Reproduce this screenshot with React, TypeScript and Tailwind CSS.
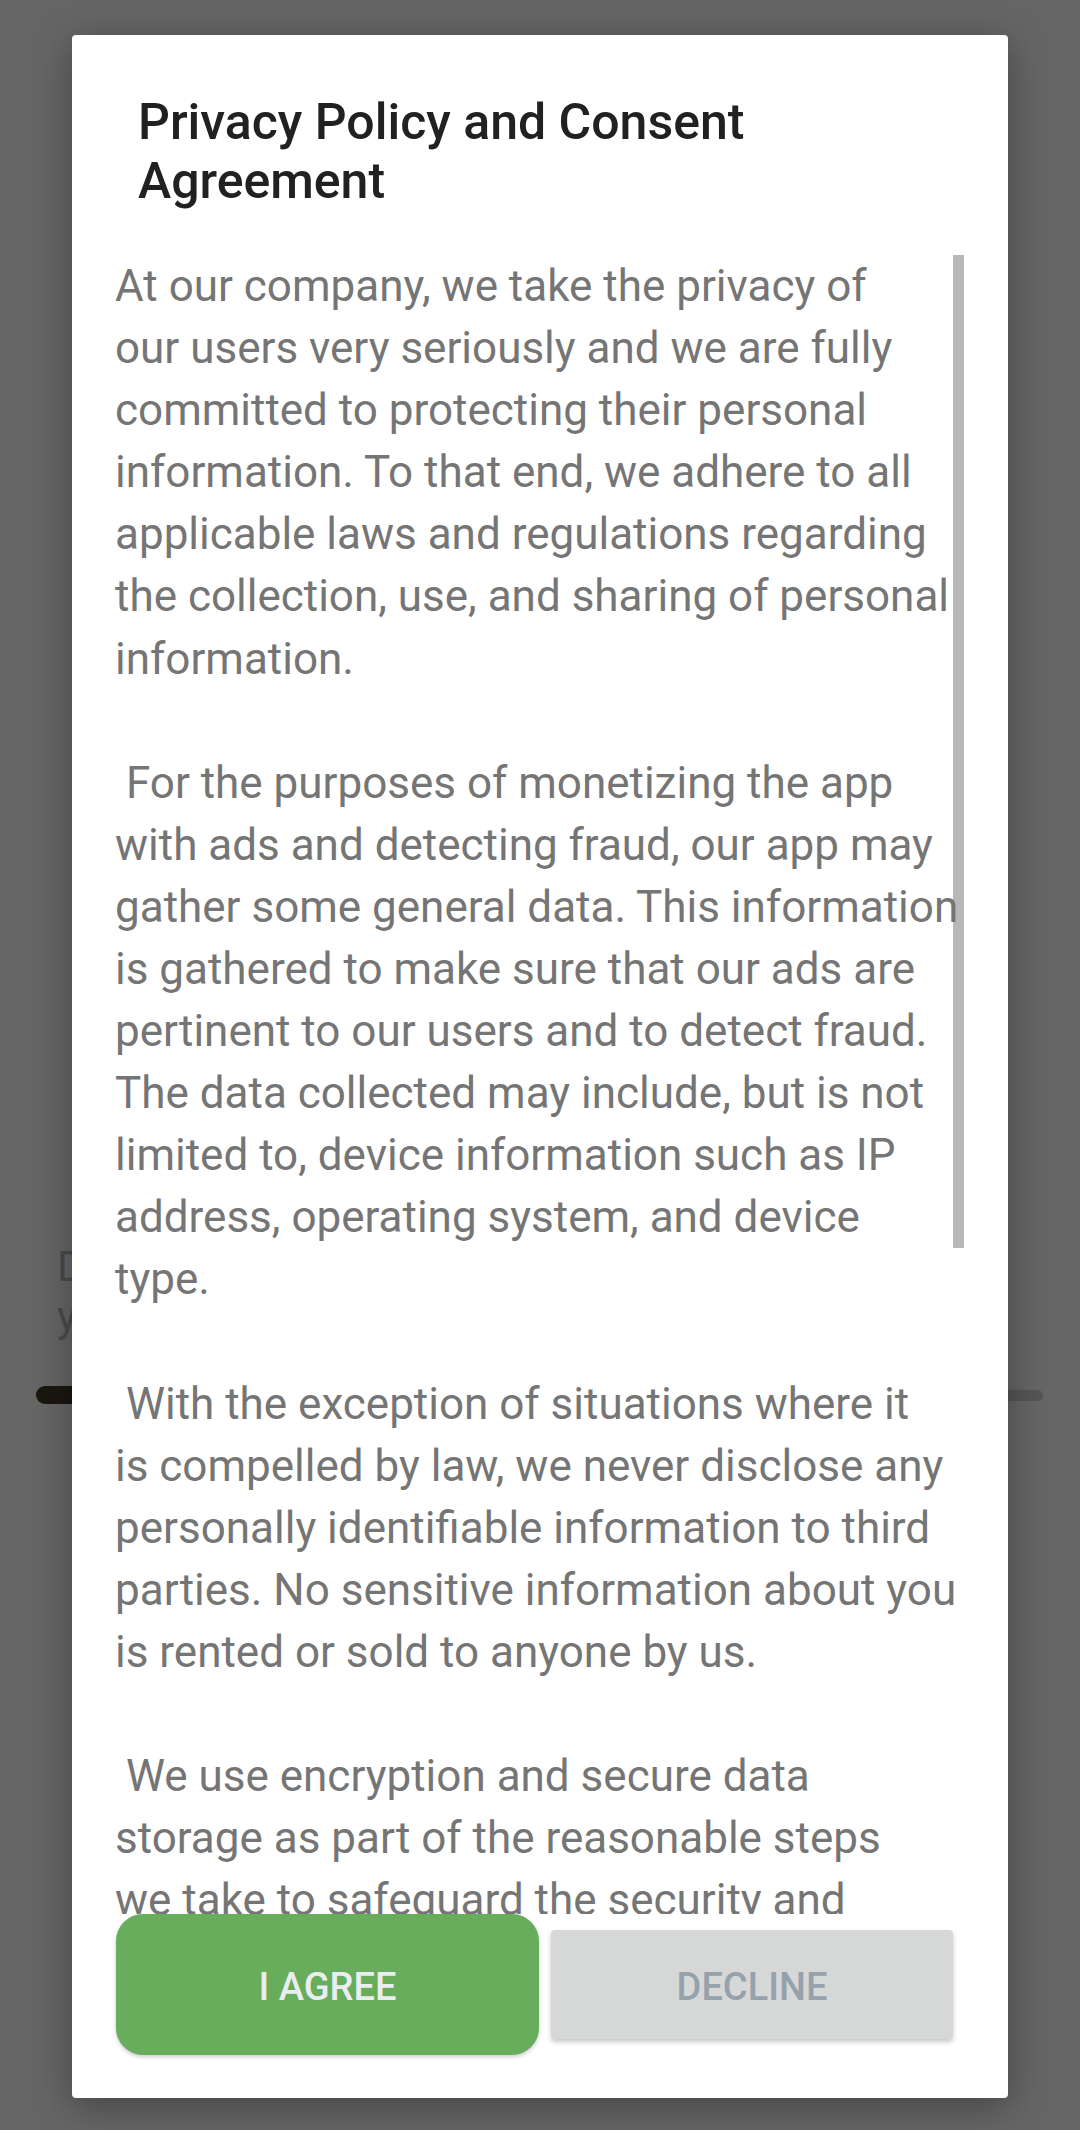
import React from 'react';

const paragraphs: string[][] = [
  [
    'At our company, we take the privacy of',
    'our users very seriously and we are fully',
    'committed to protecting their personal',
    'information. To that end, we adhere to all',
    'applicable laws and regulations regarding',
    'the collection, use, and sharing of personal',
    'information.',
  ],
  [
    ' For the purposes of monetizing the app',
    'with ads and detecting fraud, our app may',
    'gather some general data. This information',
    'is gathered to make sure that our ads are',
    'pertinent to our users and to detect fraud.',
    'The data collected may include, but is not',
    'limited to, device information such as IP',
    'address, operating system, and device',
    'type.',
  ],
  [
    ' With the exception of situations where it',
    'is compelled by law, we never disclose any',
    'personally identifiable information to third',
    'parties. No sensitive information about you',
    'is rented or sold to anyone by us.',
  ],
  [
    ' We use encryption and secure data',
    'storage as part of the reasonable steps',
    'we take to safeguard the security and',
  ],
];

const font = { fontFamily: 'Roboto, "Noto Sans", sans-serif' };

const App: React.FC = () => {
  return (
    <div className="relative w-[1080px] h-[2130px] overflow-hidden bg-white" style={font}>
      {/* page underneath the modal */}
      <div className="pt-[1242px] pl-[57px] text-[42px] leading-[50px] text-[#bcbcbc]">
        <div>Do you want to continue?</div>
        <div>you can change this later</div>
      </div>
      <div className="mt-[44px] ml-[36px] mr-[37px] flex items-center h-[18px]">
        <div className="h-[18px] w-[300px] rounded-full bg-[#423828]" />
        <div className="h-[11px] flex-1 rounded-r-full bg-[#d6d6d6]" />
      </div>

      {/* overlay */}
      <div className="absolute inset-0 bg-black/60 flex justify-center pt-[35px]">
        <div className="w-[936px] h-[2063px] bg-white rounded-[4px] flex flex-col shadow-[0_8px_40px_rgba(0,0,0,0.35)]">
          <h2 className="pt-[58px] pl-[66px] pr-[60px] text-[50px] leading-[59px] font-medium text-[#212121]">
            Privacy Policy and Consent
            <br />
            Agreement
          </h2>

          <div className="relative mt-[44px] flex-1 overflow-hidden">
            <div className="absolute top-0 right-[44px] w-[11px] h-[993px] bg-[#b8b8b8]" />
            <div className="relative pl-[43px] text-[44px] leading-[62.1px] text-[#757575] flex flex-col gap-[62px]">
              {paragraphs.map((p, i) => (
                <div key={i}>
                  {p.map((line, j) => (
                    <div key={j} className="whitespace-pre">
                      {line}
                    </div>
                  ))}
                </div>
              ))}
            </div>
          </div>

          <div className="h-[184px] flex items-start pl-[44px] gap-[12px]">
            <button className="w-[423px] h-[141px] pt-[5px] rounded-[27px] bg-[#67ad5b] text-[#eaeef0] text-[38px] font-medium shadow-[0_2px_4px_rgba(0,0,0,0.2)]">
              I AGREE
            </button>
            <button className="mt-[16px] w-[402px] h-[109px] pt-[5px] rounded-[4px] bg-[#d6d8d7] text-[#95a2ac] text-[38px] font-medium shadow-[0_3px_5px_rgba(0,0,0,0.22)]">
              DECLINE
            </button>
          </div>
        </div>
      </div>
    </div>
  );
};

export default App;
